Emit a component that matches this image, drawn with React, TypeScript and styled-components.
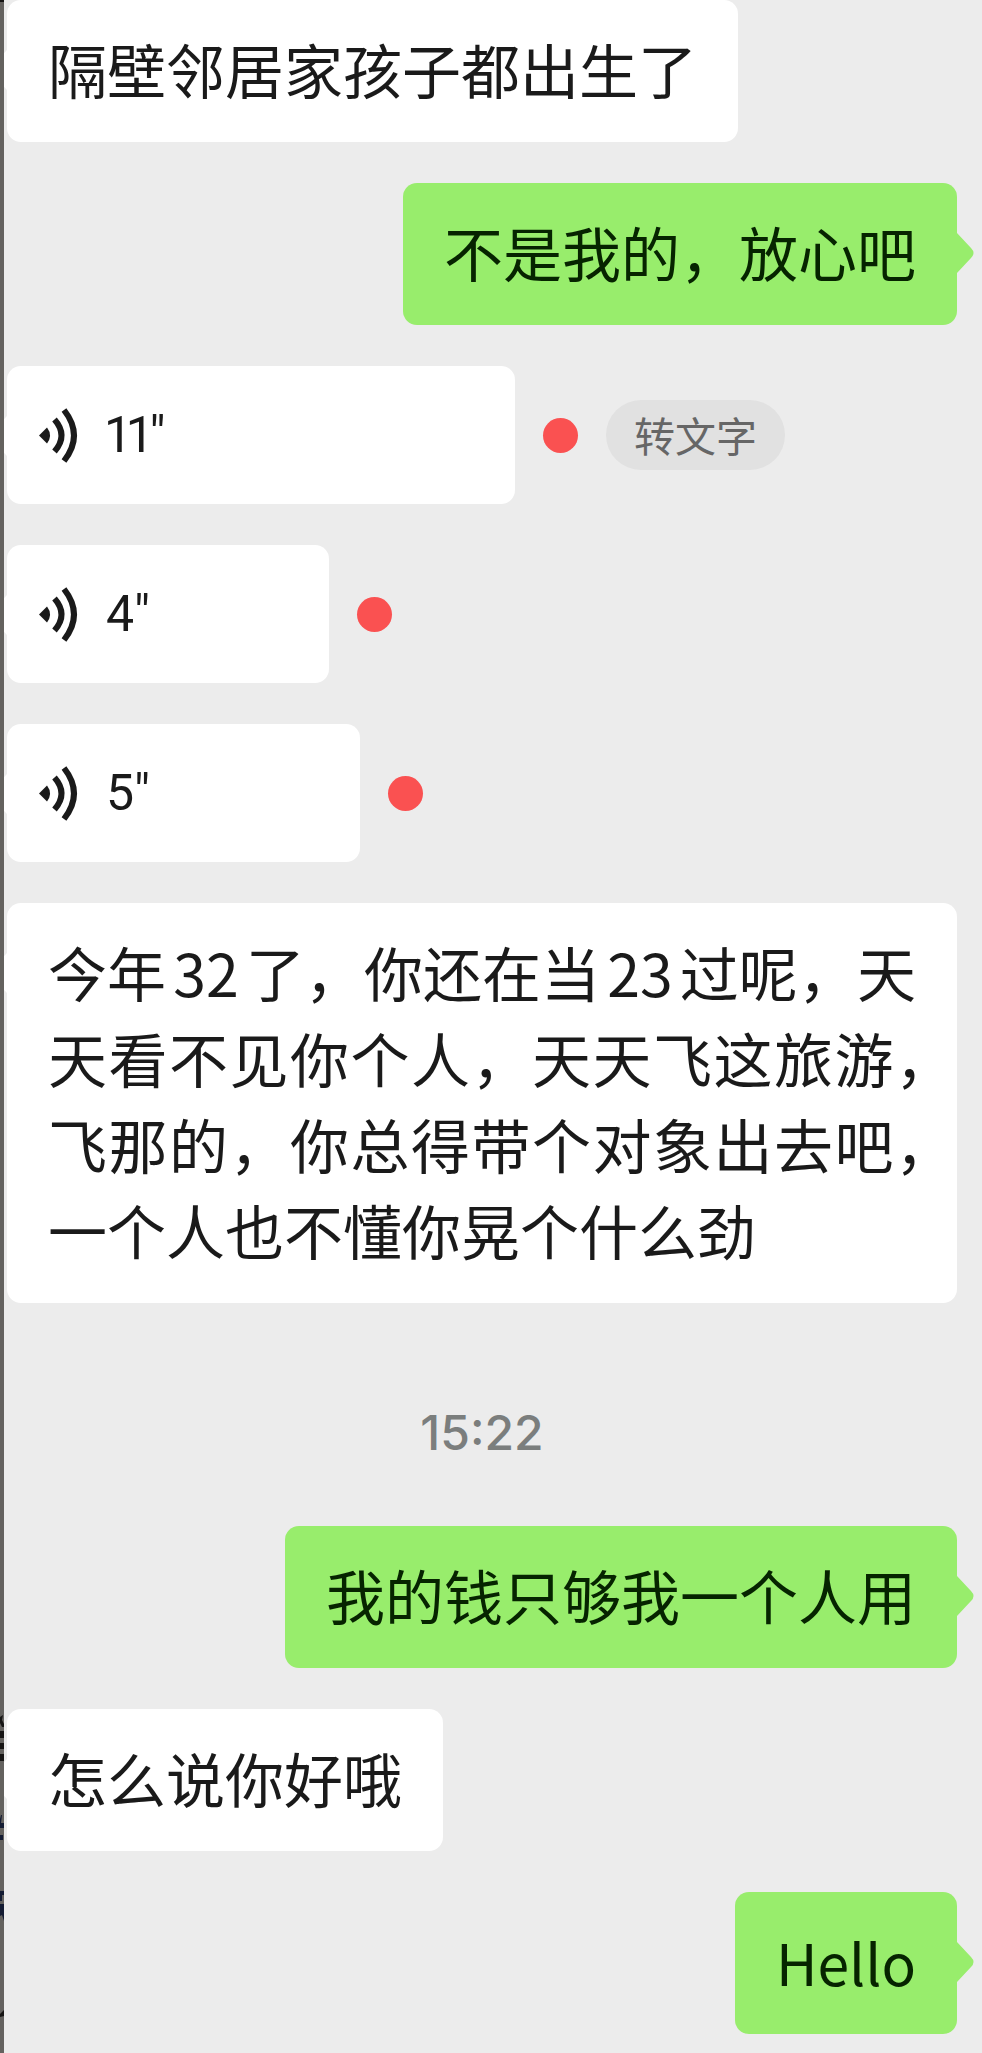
import React from 'react';
import styled, { createGlobalStyle, css } from 'styled-components';

const GlobalStyle = createGlobalStyle`
  * { box-sizing: border-box; }
  body { margin: 0; background: #ececec; }
`;

const cjk = '"Noto Sans CJK SC", "Noto Sans", sans-serif';

const Page = styled.main`
  position: relative;
  min-height: 100vh;
  padding: 0 25px 19px 7px;
  background: #ececec;
  color: #1a1a1a;
  font-family: ${cjk};
  overflow: hidden;
`;

/* Sliver of the page that lies behind the chat panel. */
const Backdrop = styled.div`
  position: absolute;
  top: 0;
  bottom: 0;
  left: 0;
  width: 4px;
  background: #64625f;
  overflow: hidden;
`;

const BackdropMarks = styled.svg`
  display: block;
`;

const Thread = styled.ol`
  display: flex;
  flex-direction: column;
  gap: 41px;
  margin: 0;
  padding: 0;
  list-style: none;
`;

const Row = styled.li<{ $mine?: boolean }>`
  display: flex;
  align-items: center;
  justify-content: ${(p) => (p.$mine ? 'flex-end' : 'flex-start')};
  gap: 28px;
`;

/* The tail points at the avatar, level with the first line. */
const tail = css`
  position: absolute;
  top: 50px;
  width: 17px;
  height: 40px;
`;

const OutTail = styled.svg`
  ${tail}
  left: 100%;
  fill: #98ed6c;
`;

const InTail = styled.svg`
  ${tail}
  right: 100%;
  fill: #fff;
  transform: scaleX(-1);
`;

const Bubble = styled.p<{ $mine?: boolean; $wide?: boolean; $latin?: boolean }>`
  position: relative;
  width: ${(p) => (p.$wide ? '100%' : 'auto')};
  margin: 0;
  padding: 26px 41px 30px;
  border-radius: 14px;
  background: ${(p) => (p.$mine ? '#98ed6c' : '#fff')};
  color: ${(p) => (p.$mine ? '#062400' : '#1a1a1a')};
  font-size: ${(p) => (p.$latin ? 57 : 59)}px;
  line-height: 86px;
`;

/* A justified line; a closing comma may hang into the bubble's padding. */
const Line = styled.span<{ $hang?: boolean; $last?: boolean }>`
  display: block;
  margin-right: ${(p) => (p.$hang ? -38 : 0)}px;
  text-align: justify;
  text-align-last: ${(p) => (p.$last ? 'left' : 'justify')};
`;

const Num = styled.span`
  margin: 0 7px;
`;

const VoiceBubble = styled.button<{ $width: number }>`
  position: relative;
  display: flex;
  align-items: center;
  gap: 28px;
  width: ${(p) => p.$width}px;
  height: 138px;
  padding: 0 32px;
  border: 0;
  border-radius: 14px;
  background: #fff;
  color: #1a1a1a;
  font: 400 50px/64px Roboto, ${cjk};
  font-variant-numeric: proportional-nums;
`;

const Unread = styled.span`
  width: 35px;
  height: 35px;
  border-radius: 50%;
  background: #fa5151;
`;

const Transcribe = styled.button`
  height: 70px;
  padding: 0 28px 2px;
  border: 0;
  border-radius: 35px;
  background: #e1e1e1;
  color: #666;
  font: 400 41px/60px ${cjk};
`;

const TimeRow = styled.li`
  padding: 62px 0 25px;
  color: #7b7e7d;
  font: 500 48px/54px Inter, ${cjk};
  text-align: center;
`;

const tailPath = 'M0 0 L14 15 Q19 20 14 25 L0 40 Z';

const VoiceIcon = () => (
  <svg width="39" height="55" viewBox="0 0 39 55" fill="none" aria-hidden="true">
    <path d="M0 27.5 L8 19.5 Q14 27.5 8 35.5 Z" fill="#1a1a1a" />
    <path d="M15.5 11.5 Q29.5 27.5 15.5 43.5" stroke="#1a1a1a" strokeWidth="6" />
    <path d="M25 2 Q45 27.5 25 53" stroke="#1a1a1a" strokeWidth="6" />
  </svg>
);

type MessageProps = { mine?: boolean; wide?: boolean; latin?: boolean; children: React.ReactNode };

const Message = ({ mine, wide, latin, children }: MessageProps) => (
  <Row $mine={mine}>
    <Bubble $mine={mine} $wide={wide} $latin={latin}>
      {children}
      {mine ? (
        <OutTail viewBox="0 0 17 40"><path d={tailPath} /></OutTail>
      ) : (
        <InTail viewBox="0 0 17 40"><path d={tailPath} /></InTail>
      )}
    </Bubble>
  </Row>
);

const Voice = ({ seconds, width, convertible }: { seconds: number; width: number; convertible?: boolean }) => (
  <Row>
    <VoiceBubble type="button" $width={width}>
      <InTail viewBox="0 0 17 40"><path d={tailPath} /></InTail>
      <VoiceIcon />
      <span>{seconds}"</span>
    </VoiceBubble>
    <Unread />
    {convertible && <Transcribe type="button">转文字</Transcribe>}
  </Row>
);

export default function App() {
  return (
    <>
      <GlobalStyle />
      <Page lang="zh-CN">
        <Thread>
          <Message>隔壁邻居家孩子都出生了</Message>
          <Message mine>不是我的，放心吧</Message>
          <Voice seconds={11} width={508} convertible />
          <Voice seconds={4} width={322} />
          <Voice seconds={5} width={353} />
          <Message wide>
            <Line>今年<Num>32</Num>了，你还在当<Num>23</Num>过呢，天</Line>
            <Line $hang>天看不见你个人，天天飞这旅游，</Line>
            <Line $hang>飞那的，你总得带个对象出去吧，</Line>
            <Line $last>一个人也不懂你晃个什么劲</Line>
          </Message>
          <TimeRow>
            <time>15:22</time>
          </TimeRow>
          <Message mine>我的钱只够我一个人用</Message>
          <Message>怎么说你好哦</Message>
          <Message mine latin>Hello</Message>
        </Thread>
        <Backdrop aria-hidden="true">
          <BackdropMarks width="4" height="2053" viewBox="0 0 4 2053">
            <path fill="#161514" d="M0 0h4v2H0zM0 1717l3-2-1 5 2 4v3H2l-2-4zM0 1731h4v7H0zM0 1743h4v6H0zM0 1754h4v7H0zM4 2010v6l-4 1v-3z" />
            <path fill="#141c33" d="M1 1815h1l-1 8h3v5H0v-9zM0 1835h3v5H0zM0 1891h4v4H2v6H0zM0 1904h4v17l-2-6-2 1z" />
          </BackdropMarks>
        </Backdrop>
      </Page>
    </>
  );
}
